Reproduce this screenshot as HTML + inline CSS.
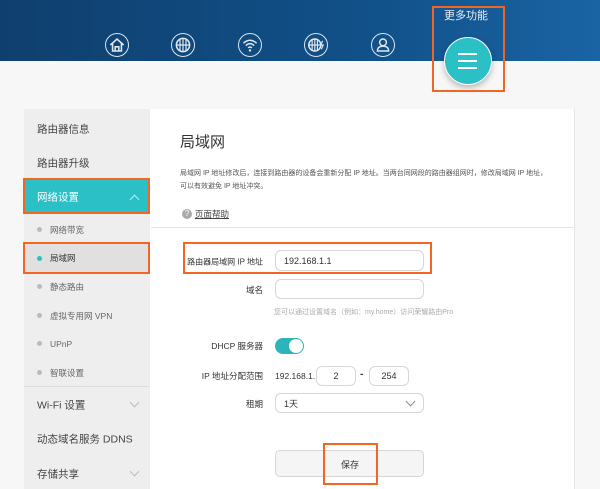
<!DOCTYPE html><html><head><meta charset="utf-8"><style>
*{margin:0;padding:0;box-sizing:border-box}
body{width:600px;height:489px;overflow:hidden;background:#f7f7f7;font-family:"Liberation Sans","Noto Sans CJK SC",sans-serif;position:relative;color:#333}
.a{position:absolute}
.hdr{left:0;top:0;width:600px;height:61px;background:linear-gradient(90deg,#0f3f6e,#115088 60%,#1a64a4)}
.ic{width:24px;height:24px;border:1.5px solid #d8e4ee;border-radius:50%;top:33px}
.ic svg{position:absolute;left:-1px;top:-1px}
.side{left:24px;top:109px;width:126px;height:380px;background:#eeeeee}
.si{left:37px;font-size:10.5px;color:#444;transform:translateY(-50%)}
.sub{left:50px;font-size:8.5px;color:#666;transform:translateY(-50%)}
.dot{left:37px;width:5px;height:5px;border-radius:50%;background:#bbb}
.ob{border:2.5px solid #f26522}
.main{left:150px;top:109px;width:425px;height:380px;background:#fff;border-right:1px solid #e6e6e6}
.lbl{font-size:8.5px;color:#333;text-align:right;width:150px;left:113px;transform:translateY(-50%);white-space:nowrap}
.inp{border:1px solid #d6d6d6;border-radius:6px;background:#fff;font-size:9px;padding-left:8px;display:flex;align-items:center}
.chev{width:7px;height:7px;border-right:1px solid #bbb;border-bottom:1px solid #bbb;transform:rotate(45deg)}
</style></head><body>
<div class="a hdr"></div>
<div class="a ic" style="left:105px"><svg width="24" height="24" viewBox="0 0 20 20"><path d="M4.5 10 L10 5 L15.5 10 M6.3 8.8 V15 H13.7 V8.8 M8.5 15 V11.5 H11.5 V15" fill="none" stroke="#e0e8f0" stroke-width="1.3"/></svg></div>
<div class="a ic" style="left:171px"><svg width="24" height="24" viewBox="0 0 20 20"><circle cx="10" cy="10" r="5.5" fill="none" stroke="#e0e8f0" stroke-width="1.3"/><path d="M4.5 10H15.5M10 4.5V15.5M7.5 5.3V14.7M12.5 5.3V14.7" stroke="#e0e8f0" stroke-width="1"/></svg></div>
<div class="a ic" style="left:238px"><svg width="24" height="24" viewBox="0 0 20 20"><path d="M4.5 8.5 Q10 3.5 15.5 8.5 M6.5 10.5 Q10 7.3 13.5 10.5 M8.4 12.4 Q10 11 11.6 12.4" fill="none" stroke="#e0e8f0" stroke-width="1.2"/><circle cx="10" cy="14.5" r="1" fill="#e0e8f0"/></svg></div>
<div class="a ic" style="left:304px"><svg width="24" height="24" viewBox="0 0 20 20"><circle cx="9" cy="10" r="5" fill="none" stroke="#e0e8f0" stroke-width="1.3"/><path d="M4 10H14M9 5V15M6.8 5.6V14.4M11.2 5.6V14.4" stroke="#e0e8f0" stroke-width="1"/><path d="M15.5 6.5 L14 10 H16 L14.5 13.5" fill="none" stroke="#e0e8f0" stroke-width="1"/></svg></div>
<div class="a ic" style="left:371px"><svg width="24" height="24" viewBox="0 0 20 20"><circle cx="10" cy="7.8" r="2.8" fill="none" stroke="#e0e8f0" stroke-width="1.2"/><path d="M5.3 15 Q5.3 11 10 11 Q14.7 11 14.7 15 Z" fill="none" stroke="#e0e8f0" stroke-width="1.2"/></svg></div>
<div class="a" style="left:444px;top:37px;width:48px;height:48px;border-radius:50%;background:#2bbfc6;border:1.5px solid #fff;box-shadow:0 3px 6px rgba(0,0,0,.25)"></div>
<div class="a" style="left:458px;top:53px;width:19px;height:1.5px;background:#fff;box-shadow:0 7px 0 #fff,0 14px 0 #fff"></div>
<div class="a" style="left:444px;top:7px;font-size:11px;color:#e8eef5">更多功能</div>
<div class="a ob" style="left:432px;top:6px;width:73px;height:86px"></div>

<div class="a side"></div>
<div class="a si" style="top:129px">路由器信息</div>
<div class="a si" style="top:163px">路由器升级</div>
<div class="a" style="left:24px;top:180px;width:126px;height:33px;background:#2bbfc6"></div>
<div class="a si" style="top:197px;color:#fff">网络设置</div>
<div class="a chev" style="left:131px;top:196px;transform:rotate(225deg);border-color:#bfeef0"></div>
<div class="a ob" style="left:23px;top:178px;width:127px;height:36px"></div>
<div class="a dot" style="top:227px"></div><div class="a sub" style="top:230px">网络带宽</div>
<div class="a" style="left:24px;top:243px;width:126px;height:30px;background:#e0e0e0"></div>
<div class="a dot" style="top:256px;background:#2bbfc6"></div><div class="a sub" style="top:258px;color:#333">局域网</div>
<div class="a ob" style="left:23px;top:242px;width:127px;height:32px"></div>
<div class="a dot" style="top:284px"></div><div class="a sub" style="top:287px">静态路由</div>
<div class="a dot" style="top:313px"></div><div class="a sub" style="top:316px">虚拟专用网 VPN</div>
<div class="a dot" style="top:341px"></div><div class="a sub" style="top:344px">UPnP</div>
<div class="a dot" style="top:370px"></div><div class="a sub" style="top:373px">智联设置</div>
<div class="a" style="left:24px;top:386px;width:126px;height:1px;background:#ddd"></div>
<div class="a si" style="top:405px">Wi-Fi 设置</div>
<div class="a chev" style="left:131px;top:399px"></div>
<div class="a si" style="top:439px">动态域名服务 DDNS</div>
<div class="a si" style="top:474px">存储共享</div>
<div class="a chev" style="left:131px;top:468px"></div>

<div class="a main"></div>
<div class="a" style="left:180px;top:131px;font-size:15px;color:#333">局域网</div>
<div class="a" style="left:180px;top:167px;font-size:7px;color:#555;line-height:13px;width:390px">局域网 IP 地址修改后，连接到路由器的设备会重新分配 IP 地址。当两台同网段的路由器组网时，修改局域网 IP 地址，<br>可以有效避免 IP 地址冲突。</div>
<div class="a" style="left:182px;top:209px;width:10px;height:10px;border-radius:50%;background:#aaa;color:#fff;font-size:8px;text-align:center;line-height:10px">?</div>
<div class="a" style="left:195px;top:208px;font-size:8.5px;color:#444;text-decoration:underline">页面帮助</div>
<div class="a" style="left:151px;top:227px;width:423px;height:1px;background:#e3e3e3"></div>
<div class="a lbl" style="top:262px;font-size:8px">路由器局域网 IP 地址</div>
<div class="a inp" style="left:275px;top:250px;width:149px;height:21px">192.168.1.1</div>
<div class="a ob" style="left:183px;top:242px;width:249px;height:32px"></div>
<div class="a lbl" style="top:290px">域名</div>
<div class="a inp" style="left:275px;top:279px;width:149px;height:20px"></div>
<div class="a" style="left:274px;top:307px;font-size:7px;color:#aaa">您可以通过设置域名（例如：my.home）访问荣耀路由Pro</div>
<div class="a lbl" style="top:346px">DHCP 服务器</div>
<div class="a" style="left:275px;top:338px;width:29px;height:16px;border-radius:8px;background:#2bb4b9"></div>
<div class="a" style="left:289px;top:339px;width:14px;height:14px;border-radius:50%;background:#fff"></div>
<div class="a lbl" style="top:376px">IP 地址分配范围</div>
<div class="a" style="left:275px;top:371px;font-size:8.5px">192.168.1.</div>
<div class="a inp" style="left:316px;top:366px;width:40px;height:20px;justify-content:center;padding:0">2</div>
<div class="a" style="left:360px;top:369px;font-size:10px;font-weight:bold">-</div>
<div class="a inp" style="left:369px;top:366px;width:40px;height:20px;justify-content:center;padding:0">254</div>
<div class="a lbl" style="top:404px">租期</div>
<div class="a inp" style="left:275px;top:393px;width:149px;height:20px">1天</div>
<div class="a chev" style="left:407px;top:398px;border-color:#888"></div>
<div class="a" style="left:275px;top:450px;width:149px;height:27px;border:1px solid #d6d6d6;border-radius:5px;background:#f5f5f5"></div>
<div class="a" style="left:341px;top:458px;font-size:9px">保存</div>
<div class="a ob" style="left:323px;top:443px;width:55px;height:42px"></div>
</body></html>
